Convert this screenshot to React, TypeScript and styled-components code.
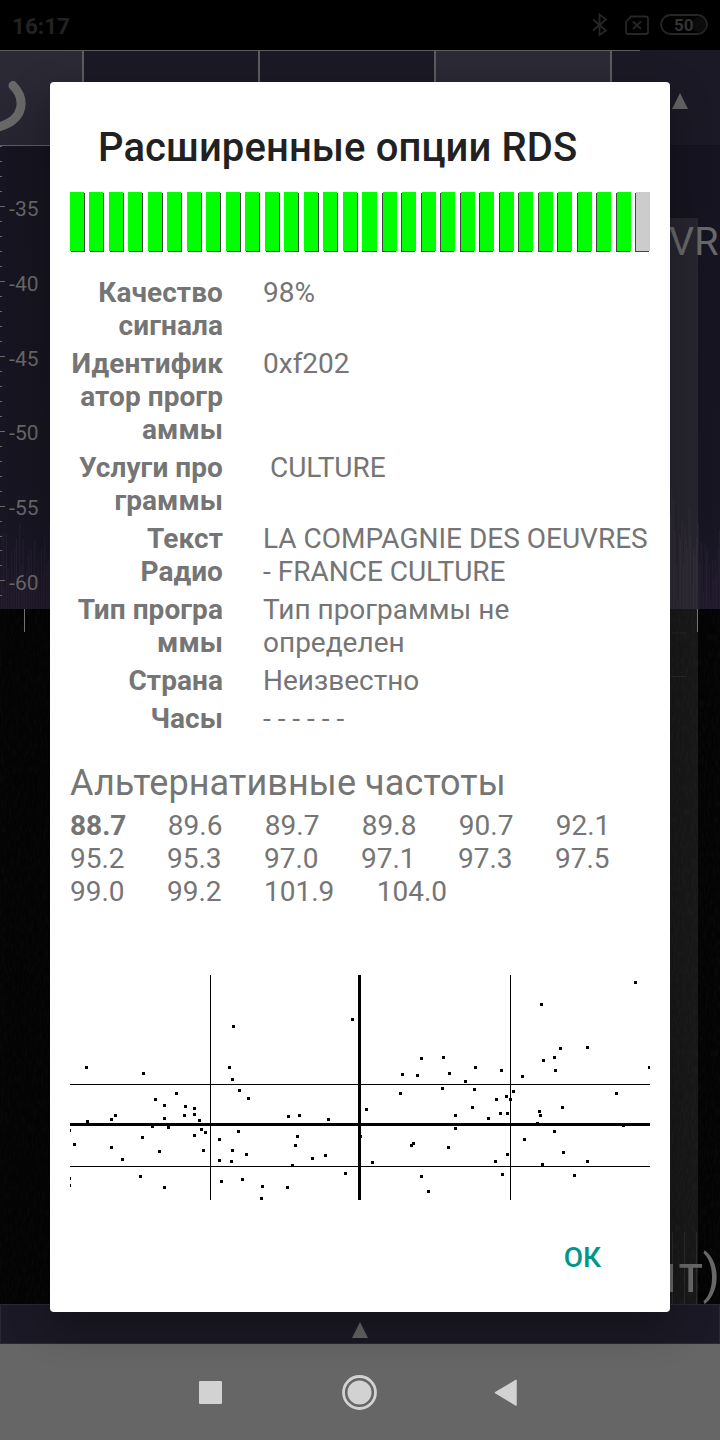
import React from 'react';
import styled, { createGlobalStyle } from 'styled-components';

const Global = createGlobalStyle`
  * { box-sizing: border-box; }
  body { margin: 0; background: #000; font-family: Roboto, sans-serif; }
  svg { display: block; }
`;

const Screen = styled.div`
  position: relative;
  width: 720px;
  height: 1440px;
  overflow: hidden;
  display: flex;
  flex-direction: column;
  background: #000;
`;

const StatusBar = styled.header`
  flex: 0 0 50px;
  display: flex;
  align-items: center;
  justify-content: space-between;
  padding: 1px 11px 0 12px;
  background: #000;
  color: #222;
`;
const Clock = styled.span`
  font-size: 22.5px;
  font-weight: 700;
`;
const StatusIcons = styled.div`
  display: flex;
  align-items: center;
  height: 49px;
  padding-bottom: 1px;
`;

const Toolbar = styled.div`
  flex: 0 0 96px;
  display: grid;
  grid-template-columns: 84px 176px 176px 176px 108px;
  background: linear-gradient(90deg, #5c5c5c 640px, transparent 640px) top / 100% 1px no-repeat, #1b1925;
`;
const ToolCell = styled.div<{ $lit?: boolean; $last?: boolean }>`
  margin-top: 1px;
  background: ${(p) => (p.$lit ? 'linear-gradient(#2c2a35, #252430)' : '#1b1925')};
  border-right: ${(p) => (p.$last ? '0' : '2px solid #5c5c5c')};
  border-bottom: 1px solid ${(p) => (p.$last ? '#14131c' : '#5c5c5c')};
  overflow: hidden;
`;
const ArrowCell = styled(ToolCell)`
  padding: 41px 0 0 59px;
  border-right: 0;
`;

const Spectrum = styled.div`
  flex: 0 0 463px;
  display: flex;
  justify-content: space-between;
  background: linear-gradient(#151420, #171521 70%, #1b1728);
`;
const Waterfall = styled.div`
  flex: 0 0 695px;
  display: flex;
  justify-content: space-between;
  background: #040404;
`;
const BottomBar = styled.div`
  flex: 0 0 40px;
  display: flex;
  justify-content: center;
  align-items: flex-start;
  padding-top: 16px;
  background: #1b1925;
  border: 1px solid #292733;
`;
const NavBar = styled.nav`
  flex: 0 0 96px;
  background: #666;
`;

const Shade = styled.div`
  position: absolute;
  inset: 0;
  padding: 82px 50px 0;
`;
const Dialog = styled.section`
  height: 1230px;
  padding: 0 20px;
  border-radius: 4px;
  background: #fff;
  color: #757575;
  box-shadow: 0 14px 40px rgba(0, 0, 0, 0.3);
`;
const Title = styled.h1`
  margin: 0;
  height: 110px;
  padding: 42px 0 0 28px;
  font-size: 40px;
  line-height: 47px;
  font-weight: 500;
  letter-spacing: 0.1px;
  color: #212121;
  white-space: nowrap;
`;
const Meter = styled.svg`
  width: 580px;
  height: 60px;
`;
const Fields = styled.dl`
  margin: 24px 0 0;
  display: flex;
  flex-direction: column;
  gap: 5px;
  font-size: 28px;
  line-height: 33px;
`;
const Field = styled.div`
  display: grid;
  grid-template-columns: 153px 387px;
  column-gap: 40px;
  white-space: pre;
`;
const Label = styled.dt`
  font-weight: 700;
  letter-spacing: 0.07px;
  text-align: right;
`;
const Value = styled.dd`
  margin: 0;
`;
const Subtitle = styled.h2`
  margin: 27px 0 0;
  font-size: 36px;
  line-height: 42px;
  font-weight: 400;
  letter-spacing: 0.1px;
  white-space: nowrap;
`;
const Frequencies = styled.div`
  margin-top: 5px;
  font-size: 28px;
  line-height: 33px;
`;
const FrequencyRow = styled.div`
  display: flex;
  gap: 42.4px;
`;
const Frequency = styled.span<{ $current?: boolean }>`
  font-weight: ${(p) => (p.$current ? 700 : 400)};
  margin-right: ${(p) => (p.$current ? '-0.9px' : '0')};
`;
const Plot = styled.svg`
  width: 580px;
  height: 225px;
  margin-top: 67px;
`;
const Actions = styled.footer`
  display: flex;
  justify-content: flex-end;
  padding: 41px 49px 0 0;
`;
const OkButton = styled.button`
  padding: 0;
  border: 0;
  background: none;
  font: 500 28px/33px Roboto, sans-serif;
  color: #009688;
`;
const EdgeDrawing = styled.svg`
  overflow: visible;
`;

const Triangle = () => (
  <svg width="18" height="18" viewBox="0 0 18 18">
    <path d="M9 1 17 17H1Z" fill="#646464" />
  </svg>
);

const POINTS: [number, number][] = [
  [233, 1026], [86, 1067], [143, 1073], [229, 1067], [232, 1079], [239, 1090], [248, 1098], [176, 1093],
  [155, 1099], [164, 1105], [185, 1106], [194, 1108], [184, 1115], [194, 1114], [199, 1120], [164, 1118],
  [115, 1115], [111, 1119], [87, 1121], [152, 1126], [168, 1127], [69, 1130], [74, 1144], [111, 1147],
  [122, 1159], [142, 1137], [159, 1151], [194, 1135], [201, 1129], [205, 1132], [203, 1150], [140, 1176],
  [164, 1187], [69, 1178], [69, 1185], [219, 1139], [238, 1131], [232, 1150], [246, 1154], [219, 1160],
  [231, 1161], [221, 1181], [242, 1179], [262, 1186], [261, 1198], [287, 1187], [292, 1165], [312, 1158],
  [325, 1155], [295, 1145], [297, 1136], [288, 1116], [299, 1115], [328, 1119], [352, 1019], [345, 1173],
  [366, 1109], [360, 1136], [372, 1162], [541, 1004], [421, 1058], [443, 1057], [402, 1074], [417, 1075],
  [449, 1073], [475, 1067], [501, 1070], [522, 1076], [465, 1081], [442, 1088], [474, 1089], [400, 1093],
  [496, 1099], [506, 1096], [513, 1091], [510, 1099], [472, 1107], [500, 1113], [507, 1113], [455, 1115],
  [488, 1118], [539, 1111], [540, 1115], [537, 1123], [455, 1128], [413, 1143], [411, 1145], [448, 1147],
  [421, 1176], [428, 1191], [507, 1154], [495, 1161], [502, 1174], [635, 982], [560, 1048], [587, 1047],
  [554, 1057], [543, 1060], [555, 1070], [649, 1067], [616, 1093], [562, 1107], [623, 1125], [554, 1131],
  [524, 1139], [563, 1152], [587, 1161], [542, 1164], [574, 1175],
];

const FIELDS: [string, string][] = [
  ['Качество\nсигнала', '98%'],
  ['Идентифик\nатор прогр\nаммы', '0xf202'],
  ['Услуги про\nграммы', ' CULTURE'],
  ['Текст\nРадио', 'LA COMPAGNIE DES OEUVRES\n- FRANCE CULTURE'],
  ['Тип програ\nммы', 'Тип программы не\nопределен'],
  ['Страна', 'Неизвестно'],
  ['Часы', '- - - - - -'],
];

const FREQUENCIES = [
  ['88.7', '89.6', '89.7', '89.8', '90.7', '92.1'],
  ['95.2', '95.3', '97.0', '97.1', '97.3', '97.5'],
  ['99.0', '99.2', '101.9', '104.0'],
];

const NOISE_LEFT = [28, 76, 20, 75, 40, 22, 56, 30, 62, 70, 18, 85, 44, 70, 25, 38, 54, 59, 58, 30, 68, 28, 50, 18, 60, 35, 72, 44, 50, 83];
const NOISE_RIGHT = [92, 119, 108, 78, 45, 10, 75, 70, 90, 45, 83, 70, 60, 100, 72, 25, 60, 55, 72, 86, 45, 66, 64, 18, 65, 56, 60, 44, 10, 49, 30, 50, 35, 60, 79];

const SignalMeter = () => (
  <Meter viewBox="0 0 580 60" shapeRendering="crispEdges">
    {Array.from({ length: 30 }, (_, i) => {
      const x = Math.round((i * 565) / 29);
      const fill = i < 29 ? '#00ff00' : '#ccc';
      const shift = Math.sign(15 - i);
      const w = shift === 0 ? 15 : 14;
      const left = shift < 0 ? x + 1 : x;
      return (
        <g key={i}>
          <rect x={left + shift} y="1" width={w} height="59" fill="#444" />
          <rect x={left} y="0" width={w} height="59" fill={fill} />
        </g>
      );
    })}
  </Meter>
);

const Scatter = () => (
  <Plot viewBox="70 975 580 225" shapeRendering="crispEdges">
    <rect x="210" y="975" width="1" height="225" />
    <rect x="358" y="975" width="3" height="225" />
    <rect x="510" y="975" width="1" height="225" />
    <rect x="70" y="1084" width="580" height="1" />
    <rect x="70" y="1123" width="580" height="3" />
    <rect x="70" y="1166" width="580" height="1" />
    {POINTS.map(([x, y], i) => (
      <rect key={i} x={x - 1} y={y - 1} width="3" height="3" />
    ))}
  </Plot>
);

const LevelScale = () => (
  <svg width="50" height="463" viewBox="0 146 50 463">
    {NOISE_LEFT.map((h, i) => (
      <rect key={i} x={1 + i * 1.66} y={609 - h} width="1" height={h} fill="#261f30" />
    ))}
    {Array.from({ length: 31 }, (_, i) => (
      <rect key={i} x="0" y={Math.round(146.3 + i * 14.97)} width={i % 5 === 4 ? 5 : 2} height="1" fill="#666" />
    ))}
    {[-35, -40, -45, -50, -55, -60].map((v, i) => (
      <text key={v} x="9" y={216 + i * 74.8} fontSize="21" fontWeight="400" letterSpacing="0.1" fill="#686868">{v}</text>
    ))}
  </svg>
);

const SpectrumEdge = () => (
  <svg width="50" height="463" viewBox="670 146 50 463">
    <rect x="670" y="218" width="28" height="391" fill="#27252f" />
    {NOISE_RIGHT.map((h, i) => (
      <rect key={i} x={670 + i * 1.44} y={609 - h} width="1" height={h} fill={i < 20 ? '#342f3a' : '#261f30'} />
    ))}
    <text x="669" y="255" fontSize="39.5" fill="#686868">VR</text>
  </svg>
);

const WaterfallEdge = () => (
  <EdgeDrawing width="50" height="695" viewBox="670 609 50 695">
    <defs>
      <filter id="grain" x="0" y="0" width="1" height="1">
        <feTurbulence type="fractalNoise" baseFrequency="0.5 0.12" numOctaves="2" />
        <feColorMatrix values="0 0 0 0 1  0 0 0 0 1  0 0 0 0 1  0.12 0 0 0 -0.045" />
      </filter>
    </defs>
    <rect x="670" y="609" width="28" height="695" fill="#181818" />
    <rect x="670" y="609" width="50" height="695" filter="url(#grain)" opacity="0.5" />
    <rect x="697" y="609" width="1" height="23" fill="#777" />
    <rect x="672" y="632" width="14" height="2" fill="#202020" />
    <rect x="671" y="676" width="15" height="1" fill="#2a2932" />
    <path d="M672.5 1232V1304M684.5 1232V1304M696.5 1232V1304" stroke="#2a2a2a" />
    <text x="647.5 678.5 702.5" y="1292" fontSize="51" fill="#686868">йт)</text>
  </EdgeDrawing>
);

export default function App() {
  return (
    <>
      <Global />
      <Screen>
        <StatusBar>
          <Clock>16:17</Clock>
          <StatusIcons>
            <svg width="120" height="26" viewBox="589 12 120 26" fill="none" stroke="#262626" strokeWidth="1.8">
              <path d="M593 19.5 606 30.5 599.5 35V14.500L606 19.500 593 30.500" />
              <path d="M631 16.500H645.500Q648 16.500 648 18.500V32Q648 34 645.500 34H628Q626 34 626 32V22Z" />
              <path d="M633 21.500 641 29M641 21.500 633 29" />
              <rect x="692" y="17" width="14" height="15" rx="7" fill="#0c0c0c" stroke="none" />
              <rect x="661" y="15" width="46" height="19" rx="9.500" />
              <text x="674" y="31" fontSize="17" fontWeight="700" fill="#333" stroke="none">50</text>
            </svg>
          </StatusIcons>
        </StatusBar>
        <Toolbar>
          <ToolCell $lit>
            <svg width="50" height="94" viewBox="0 51 50 94">
              <path d="M13 85.500C25 98 26 119 -1 127" fill="none" stroke="#686868" strokeWidth="9" strokeLinecap="round" />
            </svg>
          </ToolCell>
          <ToolCell />
          <ToolCell />
          <ToolCell $lit />
          <ArrowCell $last>
            <Triangle />
          </ArrowCell>
        </Toolbar>
        <Spectrum>
          <LevelScale />
          <SpectrumEdge />
        </Spectrum>
        <Waterfall>
          <svg width="50" height="695" viewBox="0 609 50 695">
            <rect x="0" y="609" width="50" height="695" filter="url(#grain)" opacity="0.4" />
            <rect x="24" y="609" width="1" height="23" fill="#777" />
          </svg>
          <WaterfallEdge />
        </Waterfall>
        <BottomBar>
          <Triangle />
        </BottomBar>
        <NavBar />
        <Shade>
          <Dialog>
            <Title>Расширенные опции RDS</Title>
            <SignalMeter />
            <Fields>
              {FIELDS.map(([label, value]) => (
                <Field key={label}>
                  <Label>{label}</Label>
                  <Value>{value}</Value>
                </Field>
              ))}
            </Fields>
            <Subtitle>Альтернативные частоты</Subtitle>
            <Frequencies>
              {FREQUENCIES.map((row, r) => (
                <FrequencyRow key={r}>
                  {row.map((f, i) => (
                    <Frequency key={f} $current={r === 0 && i === 0}>{f}</Frequency>
                  ))}
                </FrequencyRow>
              ))}
            </Frequencies>
            <Scatter />
            <Actions>
              <OkButton>ОК</OkButton>
            </Actions>
          </Dialog>
          <svg width="620" height="128" viewBox="50 1312 620 128">
            <rect x="199" y="1381" width="23" height="23" rx="1" fill="#d2d2d2" />
            <circle cx="359.500" cy="1392.500" r="16" fill="none" stroke="#d2d2d2" strokeWidth="2.800" />
            <circle cx="359.500" cy="1392.500" r="12" fill="#d2d2d2" />
            <path d="M516 1380.500V1405L495.500 1392.700Z" fill="#d2d2d2" stroke="#d2d2d2" strokeWidth="1.500" strokeLinejoin="round" />
          </svg>
        </Shade>
      </Screen>
    </>
  );
}
